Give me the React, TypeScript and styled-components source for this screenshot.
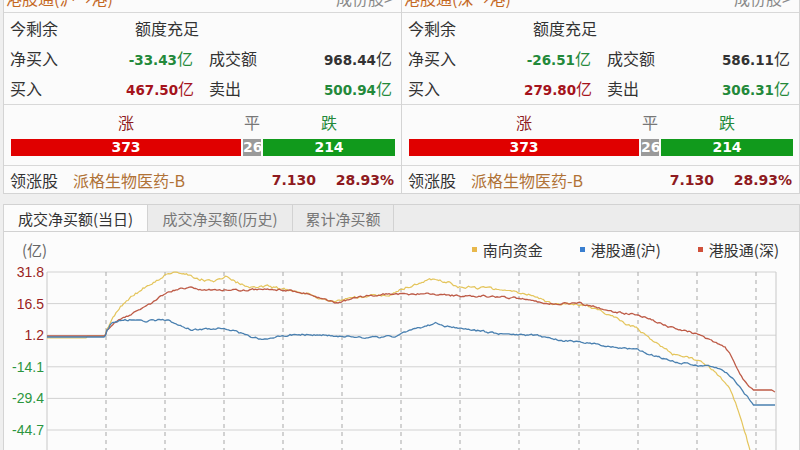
import styled, { createGlobalStyle } from "styled-components";

const GlobalStyle = createGlobalStyle`
  html, body {
    margin: 0;
    padding: 0;
    background: #efefef;
    overflow: hidden;
  }
  body {
    font-family: "Noto Sans CJK SC", "Noto Sans", sans-serif;
    color: #333;
  }
`;

type Channel = {
  title: string;
  net: string;
  turnover: string;
  buy: string;
  sell: string;
  up: number;
  flat: number;
  down: number;
  leader: string;
  price: string;
  pct: string;
};

const channels: Channel[] = [
  {
    title: "港股通(沪→港)",
    net: "-33.43",
    turnover: "968.44",
    buy: "467.50",
    sell: "500.94",
    up: 373,
    flat: 26,
    down: 214,
    leader: "派格生物医药-B",
    price: "7.130",
    pct: "28.93%",
  },
  {
    title: "港股通(深→港)",
    net: "-26.51",
    turnover: "586.11",
    buy: "279.80",
    sell: "306.31",
    up: 373,
    flat: 26,
    down: 214,
    leader: "派格生物医药-B",
    price: "7.130",
    pct: "28.93%",
  },
];

const Page = styled.div`
  width: 797px;
  height: 450px;
  padding-left: 3px;
  overflow: hidden;
`;

const TopRow = styled.div`
  display: grid;
  grid-template-columns: 398px 399px;
`;

const Panel = styled.section`
  background: #fbfbfb;
  border-left: 1px solid #d4d4d4;
  border-bottom: 1px solid #d4d4d4;
  &:last-child {
    border-right: 1px solid #d4d4d4;
  }
`;

const PanelHead = styled.div`
  height: 12px;
  overflow: hidden;
  display: flex;
  justify-content: space-between;
  padding: 0 8px 0 2px;
  border-bottom: 1px solid #d8d8d8;
`;

const HeadTitle = styled.span`
  display: block;
  margin-top: -12px;
  line-height: 20px;
  font-size: 16px;
  color: #c4681f;
`;

const HeadLink = styled(HeadTitle)`
  color: #8a8a8a;
`;

const InfoGrid = styled.div`
  display: grid;
  grid-template-columns: 116px 67px 107px 1fr;
  grid-auto-rows: 30px;
  align-items: center;
  padding: 0 9px 1px 6px;
  border-bottom: 1px solid #d8d8d8;
  font-size: 16px;
`;

const Label = styled.span<{ $indent?: number }>`
  padding-left: ${(p) => p.$indent ?? 0}px;
  white-space: nowrap;
`;

const Quota = styled.span`
  grid-column: 2 / span 3;
  padding-left: 9px;
`;

const Value = styled.span<{ $tone: "up" | "down" | "plain" }>`
  text-align: right;
  white-space: nowrap;
  color: ${(p) =>
    p.$tone === "up" ? "#a5131c" : p.$tone === "down" ? "#23893a" : "#333"};
`;

const Num = styled.b`
  font-family: "DejaVu Sans", sans-serif;
  font-size: 13.5px;
  font-weight: bold;
`;

const Breadth = styled.div`
  padding: 6px 6px 9px 7px;
  border-bottom: 1px solid #d8d8d8;
`;

const Track = styled.div`
  display: flex;
  gap: 2px;
`;

const Cap = styled.span<{ $n: number; $c: string }>`
  flex: ${(p) => p.$n} 1 0;
  min-width: 18px;
  text-align: center;
  font-size: 16px;
  line-height: 22px;
  color: ${(p) => p.$c};
`;

const Bar = styled.span<{ $n: number; $bg: string }>`
  flex: ${(p) => p.$n} 1 0;
  min-width: 18px;
  height: 17px;
  margin-top: 6px;
  background: ${(p) => p.$bg};
  color: #fff;
  text-align: center;
  font-family: "DejaVu Sans", sans-serif;
  font-weight: bold;
  font-size: 14px;
  line-height: 17px;
`;

const Leader = styled.div`
  display: grid;
  grid-template-columns: 63px 1fr 65px 78px;
  align-items: center;
  height: 26px;
  padding: 1px 7px 0 6px;
  font-size: 16px;
`;

const StockName = styled.span`
  color: #b07236;
  white-space: nowrap;
`;

const LeadNum = styled.b`
  text-align: right;
  color: #8e1a20;
  font-family: "DejaVu Sans", sans-serif;
  font-size: 14px;
`;

const ChartBox = styled.section`
  margin-top: 10px;
  border-left: 1px solid #d4d4d4;
  border-right: 1px solid #d4d4d4;
  background: #fcfcfc;
`;

const Tabs = styled.div`
  display: flex;
  height: 26px;
  background: #ececec;
  border-top: 1px solid #d2d2d2;
  border-bottom: 1px solid #d2d2d2;
`;

const Tab = styled.div<{ $active?: boolean; $w: number }>`
  width: ${(p) => p.$w}px;
  display: flex;
  align-items: center;
  justify-content: center;
  font-size: 15px;
  border-right: 1px solid #d2d2d2;
  background: ${(p) => (p.$active ? "#fcfcfc" : "#ebebeb")};
  color: ${(p) => (p.$active ? "#333" : "#777")};
`;

const ChartHead = styled.div`
  display: flex;
  align-items: center;
  height: 18px;
  padding: 8px 0 4px 18px;
  font-size: 15px;
`;

const Unit = styled.span`
  color: #666;
  flex: 1;
`;

const Legend = styled.div`
  display: flex;
  gap: 37px;
  padding-right: 20px;
`;

const LegendItem = styled.span<{ $c: string }>`
  display: flex;
  align-items: center;
  gap: 6px;
  color: #333;
  &::before {
    content: "";
    width: 5px;
    height: 5px;
    background: ${(p) => p.$c};
  }
`;

const Plot = styled.svg`
  display: block;
`;

// chart geometry in page coordinates
const X0 = 47;
const X1 = 776;
const gridY = [270, 301.6, 333.2, 364.8, 396.4, 428];
const axis = ["31.8", "16.5", "1.2", "-14.1", "-29.4", "-44.7"];
const ticksX = [106, 165, 224, 283, 342, 401, 460, 519, 579, 638, 697, 756];

type Pt = [number, number];

const southbound: Pt[] = [
  [47, 336], [86, 336], [87, 334], [105, 334], [107, 328], [112, 316], [120, 305],
  [135, 292], [150, 282], [165, 273], [175, 270], [183, 271], [195, 276], [205, 278],
  [215, 279], [222, 277], [226, 275], [235, 280], [250, 284], [270, 285], [283, 287],
  [300, 290], [320, 296], [335, 300], [342, 299], [350, 296], [370, 294], [390, 293],
  [400, 288], [415, 282], [430, 278], [436, 277], [450, 281], [460, 285], [480, 286],
  [500, 288], [519, 290], [535, 295], [553, 302], [579, 302], [600, 309], [613, 315],
  [638, 327], [655, 340], [673, 353], [690, 356], [697, 358], [710, 366], [720, 375],
  [727, 383], [733, 394], [740, 414], [746, 434], [751, 452], [755, 465],
];

const shanghai: Pt[] = [
  [47, 335], [105, 335], [107, 329], [111, 322], [118, 319], [130, 318], [145, 319],
  [160, 318], [168, 319], [175, 321], [185, 326], [192, 328], [200, 327], [215, 327],
  [222, 326], [228, 327], [240, 331], [255, 336], [263, 338], [272, 336], [283, 334],
  [295, 332], [310, 333], [330, 333], [342, 334], [360, 335], [380, 335], [398, 334],
  [402, 331], [415, 327], [430, 323], [437, 321], [445, 324], [460, 326], [480, 329],
  [500, 332], [519, 333], [535, 333], [560, 338], [579, 340], [600, 343], [620, 346],
  [638, 348], [655, 354], [670, 359], [690, 362], [697, 364], [705, 363], [715, 365],
  [722, 368], [732, 375], [742, 388], [750, 398], [753, 403], [775, 403],
];

const shenzhen: Pt[] = [
  [47, 334], [105, 334], [107, 329], [112, 322], [120, 318], [135, 310], [150, 302],
  [164, 292], [172, 289], [180, 287], [190, 286], [200, 288], [225, 288], [240, 288],
  [260, 287], [283, 288], [300, 290], [320, 296], [335, 301], [342, 300], [355, 296],
  [380, 292], [400, 292], [420, 292], [443, 293], [460, 294], [480, 294], [500, 295],
  [519, 296], [535, 300], [553, 302], [579, 301], [595, 305], [615, 310], [638, 313],
  [655, 319], [670, 325], [690, 330], [697, 332], [710, 338], [725, 345], [733, 357],
  [743, 377], [753, 388], [772, 388], [775, 390],
];

function trace(keys: Pt[], seed: number, amp: number, from: number, to: number) {
  let s = seed;
  const rnd = () => {
    s = (s * 16807) % 2147483647;
    return s / 2147483647;
  };
  let wobble = 0;
  let k = 0;
  const out: string[] = [];
  const end = keys[keys.length - 1][0];
  for (let x = keys[0][0]; x <= end; x += 1.5) {
    while (k < keys.length - 2 && x > keys[k + 1][0]) k++;
    const [xa, ya] = keys[k];
    const [xb, yb] = keys[k + 1];
    const t = xb === xa ? 0 : (x - xa) / (xb - xa);
    const y = ya + (yb - ya) * Math.min(1, Math.max(0, t));
    const live = x > from && x < to;
    wobble = live ? wobble * 0.55 + (rnd() - 0.5) * amp : 0;
    out.push(`${x.toFixed(1)},${(y + wobble).toFixed(1)}`);
  }
  out.push(`${end},${keys[keys.length - 1][1]}`);
  return "M" + out.join("L");
}

const FlowChart = () => (
  <Plot width={796} height={200} viewBox="4 260 796 200">
    {gridY.map((y) => (
      <line key={y} x1={X0} x2={X1} y1={y} y2={y} stroke="#d2d2d2" strokeWidth={1} />
    ))}
    {ticksX.map((x) => (
      <line
        key={x}
        x1={x}
        x2={x}
        y1={270}
        y2={470}
        stroke="#a8a8a8"
        strokeWidth={1}
        strokeDasharray="4 4"
      />
    ))}
    <line x1={X0} x2={X0} y1={270} y2={470} stroke="#c8c8c8" />
    <line x1={X1} x2={X1} y1={270} y2={470} stroke="#c8c8c8" />
    {axis.map((v, i) => (
      <text
        key={v}
        x={44}
        y={gridY[i] + 5}
        textAnchor="end"
        fontFamily="'Liberation Sans', Arial, sans-serif"
        fontSize={14}
        fill={v.startsWith("-") ? "#2b9640" : "#9a1f22"}
      >
        {v}
      </text>
    ))}
    <path d={trace(southbound, 91, 2.2, 106, 752)} fill="none" stroke="#e4c55c" strokeWidth={1.2} />
    <path d={trace(shenzhen, 37, 1.6, 106, 753)} fill="none" stroke="#bd5a46" strokeWidth={1.3} />
    <path d={trace(shanghai, 53, 1.6, 106, 753)} fill="none" stroke="#4a80b0" strokeWidth={1.3} />
  </Plot>
);

const ChannelPanel = ({ c }: { c: Channel }) => (
  <Panel>
    <PanelHead>
      <HeadTitle>{c.title}</HeadTitle>
      <HeadLink>成份股&gt;</HeadLink>
    </PanelHead>
    <InfoGrid>
      <Label>今剩余</Label>
      <Quota>额度充足</Quota>
      <Label>净买入</Label>
      <Value $tone="down">
        <Num>{c.net}</Num>亿
      </Value>
      <Label $indent={16}>成交额</Label>
      <Value $tone="plain">
        <Num>{c.turnover}</Num>亿
      </Value>
      <Label>买入</Label>
      <Value $tone="up">
        <Num>{c.buy}</Num>亿
      </Value>
      <Label $indent={16}>卖出</Label>
      <Value $tone="down">
        <Num>{c.sell}</Num>亿
      </Value>
    </InfoGrid>
    <Breadth>
      <Track>
        <Cap $n={c.up} $c="#8e1a20">涨</Cap>
        <Cap $n={c.flat} $c="#777">平</Cap>
        <Cap $n={c.down} $c="#23893a">跌</Cap>
      </Track>
      <Track>
        <Bar $n={c.up} $bg="#e00000">{c.up}</Bar>
        <Bar $n={c.flat} $bg="#9a9a9a">{c.flat}</Bar>
        <Bar $n={c.down} $bg="#119a1c">{c.down}</Bar>
      </Track>
    </Breadth>
    <Leader>
      <Label>领涨股</Label>
      <StockName>{c.leader}</StockName>
      <LeadNum>{c.price}</LeadNum>
      <LeadNum>{c.pct}</LeadNum>
    </Leader>
  </Panel>
);

export default function App() {
  return (
    <Page>
      <GlobalStyle />
      <TopRow>
        {channels.map((c) => (
          <ChannelPanel key={c.title} c={c} />
        ))}
      </TopRow>
      <ChartBox>
        <Tabs>
          <Tab $active $w={143}>成交净买额(当日)</Tab>
          <Tab $w={144}>成交净买额(历史)</Tab>
          <Tab $w={100}>累计净买额</Tab>
        </Tabs>
        <ChartHead>
          <Unit>(亿)</Unit>
          <Legend>
            <LegendItem $c="#e8b84c">南向资金</LegendItem>
            <LegendItem $c="#3a7fd0">港股通(沪)</LegendItem>
            <LegendItem $c="#d0503a">港股通(深)</LegendItem>
          </Legend>
        </ChartHead>
        <FlowChart />
      </ChartBox>
    </Page>
  );
}
